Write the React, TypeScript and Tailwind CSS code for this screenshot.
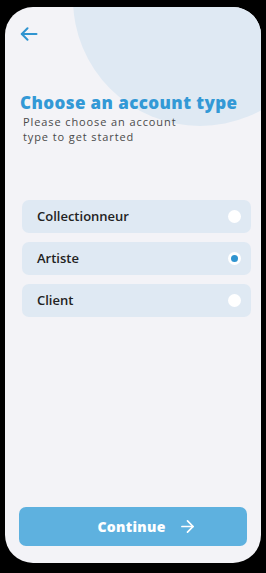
import { ArrowRight } from "lucide-react"

const options = [
  { label: "Collectionneur", selected: false },
  { label: "Artiste", selected: true },
  { label: "Client", selected: false },
]

export default function App() {
  return (
    <div className="w-[266px] h-[573px] bg-black pl-[5px] pt-[7px]">
      <div
        className="relative w-[256px] h-[556px] overflow-hidden rounded-[28px] bg-[#f3f3f7] flex flex-col"
        style={{ fontFamily: '"Open Sans", "Noto Sans", sans-serif' }}
      >
        {/* decorative circle */}
        <div className="absolute left-[68px] top-[-135px] w-[254px] h-[254px] rounded-full bg-[#dfe9f3]" />

        <div className="relative flex flex-col flex-1 pl-[15px] pr-[14px]">
          <button className="mt-[20px] w-[18px] h-[14px] text-[#2f94d0]">
            <svg width="18" height="14" viewBox="0 0 18 14" fill="none" stroke="currentColor" strokeWidth="2" strokeLinecap="round" strokeLinejoin="round">
              <path d="M16.5 7H1.8" />
              <path d="M7.5 1.3 1.8 7l5.7 5.7" />
            </svg>
          </button>

          <h1 className="mt-[51px] text-[17px] leading-[22px] font-extrabold tracking-[0.4px] text-[#3399d6] whitespace-nowrap">
            Choose an account type
          </h1>
          <p className="pl-[3px] w-[180px] text-[11px] leading-[15px] tracking-[0.9px] text-[#4a4a4a]">
            Please choose an account type to get started
          </p>

          <div className="mt-[56px] pl-[2px] -mr-[4px] flex flex-col gap-[9px]">
            {options.map((o) => (
              <div
                key={o.label}
                className="h-[33px] rounded-[7px] bg-[#dfe9f3] flex items-center justify-between pl-[15px] pr-[10px]"
              >
                <span className="text-[13px] font-semibold text-[#222]">{o.label}</span>
                <span className="w-[13px] h-[13px] rounded-full bg-white flex items-center justify-center">
                  {o.selected && <span className="w-[7px] h-[7px] rounded-full bg-[#2f94d0]" />}
                </span>
              </div>
            ))}
          </div>

          <div className="flex-1" />

          <button className="mb-[17px] -ml-[1px] h-[39px] rounded-[7px] bg-[#5eb1df] flex items-center justify-center gap-[12px] pl-[28px] text-white">
            <span className="text-[14px] font-extrabold tracking-[0.3px]">Continue</span>
            <ArrowRight className="w-[19px] h-[19px]" strokeWidth={2.2} />
          </button>
        </div>
      </div>
    </div>
  )
}
